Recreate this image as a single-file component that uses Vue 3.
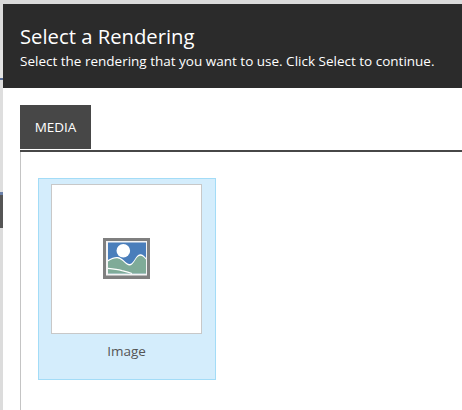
<script setup>
const tabs = ['Media']
</script>

<template>
  <div class="page">
    <div class="top-strip"></div>
    <div class="body">
      <div class="backdrop">
        <i class="s1"></i><i class="s2"></i><i class="s3"></i><i class="s4"></i><i class="s5"></i><i class="s6"></i><i class="s7"></i>
      </div>
      <div class="dialog">
        <header class="head">
          <h1>Select a Rendering</h1>
          <p>Select the rendering that you want to use. Click Select to continue.</p>
        </header>
        <div class="content">
          <div class="tabs">
            <div v-for="t in tabs" :key="t" class="tab">{{ t.toUpperCase() }}</div>
          </div>
          <div class="panel">
            <div class="item">
              <div class="thumb">
                <svg class="pic" width="47" height="41" viewBox="0 0 47 41">
                  <rect width="47" height="41" fill="#7f7f7f" />
                  <rect x="3" y="3" width="41" height="34.5" fill="#f4f4f4" />
                  <rect x="5" y="4.5" width="38" height="31" fill="#4a7ebb" />
                  <circle cx="20.3" cy="12.7" r="6.8" fill="#fff" />
                  <path d="M5 22 C9 19.5 12 18.6 15 19 C20 19.8 23 26.5 27 26 C31 25.5 33 16.5 37 16.2 C39.5 16 41.5 18 43 20 V35.5 H5 Z" fill="#fff" />
                  <path d="M5 23.5 C9 21 12 20 15 20.4 C20 21.2 23 28 27 27.5 C31 27 33 18 37 17.7 C39.5 17.5 41.5 19.5 43 21.5 V35.5 H5 Z" fill="#7fab98" />
                  <path d="M5 30.4 C10 30.8 15 31.4 19 32.6 C23 33.6 26 34.4 29 35.5" fill="none" stroke="#fff" stroke-width="1.2" />
                </svg>
              </div>
              <div class="label">Image</div>
            </div>
          </div>
        </div>
      </div>
    </div>
  </div>
</template>

<style>
html, body { margin: 0; background: #fff; overflow: hidden; }
</style>

<style scoped>
.page {
  width: 462px;
  height: 410px;
  display: flex;
  flex-direction: column;
  background: #dcdcdc;
  font-family: "Open Sans", sans-serif;
  overflow: hidden;
}
.top-strip { height: 4px; flex: none; background: #dadada; }
.body { flex: 1; display: flex; min-height: 0; }
.backdrop { width: 3px; flex: none; display: flex; flex-direction: column; }
.backdrop i { display: block; }
.s1 { height: 46px; background: #dcdcdc; }
.s2 { height: 28px; background: #e4e4e4; }
.s3 { height: 2px; background: #5a6d94; }
.s4 { height: 112px; background: #dedede; }
.s5 { height: 3px; background: #6b80a8; }
.s6 { height: 33px; background: #555; }
.s7 { flex: 1; background: #dcdcdc; }
.dialog { flex: 1; display: flex; flex-direction: column; background: #fff; min-width: 0; }
.head {
  height: 84px;
  flex: none;
  box-sizing: border-box;
  padding: 19px 0 0 17px;
  background: #2b2b2b;
  color: #fff;
}
h1 { margin: 0; font-size: 20.25px; line-height: 27px; font-weight: 400; white-space: nowrap; }
p { margin: 2px 0 0; font-size: 13.5px; line-height: 18px; white-space: nowrap; }
.content { flex: 1; padding: 17px 0 0 17px; display: flex; flex-direction: column; min-height: 0; }
.tabs { display: flex; height: 45px; flex: none; border-bottom: 2px solid #474747; box-sizing: content-box; }
.tab {
  width: 71px;
  height: 44px;
  background: #474747;
  color: #fff;
  font-size: 13.5px;
  line-height: 44px;
  text-align: center;
}
.panel {
  flex: 1;
  border-left: 1px solid #c4c4c4;
  padding: 26px 0 0 17px;
}
.item {
  width: 178px;
  height: 202px;
  box-sizing: border-box;
  padding: 5px 0 0 12px;
  background: #d4edfc;
  border: 1px solid #a3dcf7;
}
.thumb {
  width: 151px;
  height: 150px;
  box-sizing: border-box;
  padding-bottom: 1px;
  background: #fff;
  border: 1px solid #c8c8c8;
  display: flex;
  align-items: center;
  justify-content: center;
}
.pic { display: block; filter: blur(0.35px); }
.label {
  width: 151px;
  margin-top: 8px;
  text-align: center;
  font-size: 13.5px;
  line-height: 18px;
  color: #555;
}
</style>
